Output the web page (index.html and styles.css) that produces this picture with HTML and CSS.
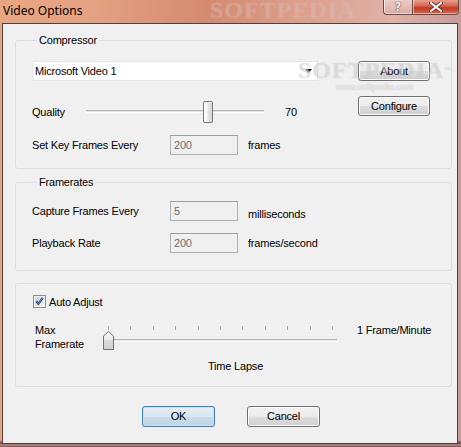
FILE: index.html
```html
<!DOCTYPE html>
<html>
<head>
<meta charset="utf-8">
<title>Video Options</title>
<link rel="stylesheet" href="styles.css">
</head>
<body>
<div class="window">
  <div class="titlebar">
    <span class="title">Video Options</span>
    <span class="wm-title">SOFTPEDIA</span>
    <div class="caption">
      <div class="cap-btn help">?</div>
      <div class="cap-btn close">
        <svg width="14" height="10" viewBox="0 0 14 10"><path d="M2 1 L12 9 M12 1 L2 9" stroke="#5a2a22" stroke-width="3.6" stroke-linecap="square"/><path d="M2 1 L12 9 M12 1 L2 9" stroke="#ffffff" stroke-width="2" stroke-linecap="square"/></svg>
      </div>
    </div>
  </div>
  <div class="client">
    <fieldset class="group compressor">
      <legend>Compressor</legend>
      <div class="comp-grid">
        <div class="comp-left">
          <div class="combo">
            <span>Microsoft Video 1</span>
            <svg class="arrow" width="7" height="4" viewBox="0 0 7 4"><path d="M0 0 H7 L3.5 4 Z" fill="#000"/></svg>
          </div>
          <div class="row quality-row">
            <span class="lbl lbl-quality">Quality</span>
            <div class="hslider">
              <div class="track"></div>
              <div class="thumb"></div>
            </div>
            <span class="val">70</span>
          </div>
          <div class="row">
            <span class="lbl">Set Key Frames Every</span>
            <div class="field">200</div>
            <span class="unit">frames</span>
          </div>
        </div>
        <div class="comp-right">
          <div class="btn">About</div>
          <div class="btn">Configure</div>
        </div>
      </div>
      <div class="wm-content"><span class="wm-big">SOFTPEDIA<sup>™</sup></span><span class="wm-url">www.softpedia.com</span></div>
    </fieldset>

    <fieldset class="group framerates">
      <legend>Framerates</legend>
      <div class="row">
        <span class="lbl">Capture Frames Every</span>
        <div class="field">5</div>
        <span class="unit unit-low">milliseconds</span>
      </div>
      <div class="row row-gap">
        <span class="lbl">Playback Rate</span>
        <div class="field">200</div>
        <span class="unit">frames/second</span>
      </div>
    </fieldset>

    <fieldset class="group lapse">
      <div class="check-row">
        <svg class="check" width="13" height="13" viewBox="0 0 13 13">
          <defs>
            <linearGradient id="cb" x1="0" y1="0" x2="1" y2="1">
              <stop offset="0" stop-color="#cbcfd5"/>
              <stop offset="1" stop-color="#f7f7f7"/>
            </linearGradient>
          </defs>
          <rect x="0.5" y="0.5" width="12" height="12" fill="#f4f4f4" stroke="#8f8f8f"/>
          <rect x="2" y="2" width="9" height="9" fill="url(#cb)"/>
          <path d="M3.3 6.2 L5.4 8.8 L9.8 2.8" fill="none" stroke="#1d3f7a" stroke-width="2.2"/>
          <path d="M3.3 6.2 L5.4 8.8 L9.8 2.8" fill="none" stroke="#5a8fd6" stroke-width="1"/>
        </svg>
        <span>Auto Adjust</span>
      </div>
      <div class="slider-row">
        <span class="lbl-max">Max<br>Framerate</span>
        <div class="tslider">
          <div class="ticks">
            <i></i><i></i><i></i><i></i><i></i><i></i><i></i><i></i><i></i><i></i><i></i>
          </div>
          <div class="ttrack"></div>
          <svg class="tthumb" width="11" height="19" viewBox="0 0 11 19">
            <defs>
              <linearGradient id="tg" x1="0" y1="0" x2="0" y2="1">
                <stop offset="0" stop-color="#f7f7f7"/>
                <stop offset="0.45" stop-color="#ececec"/>
                <stop offset="0.5" stop-color="#dcdcdc"/>
                <stop offset="1" stop-color="#cfcfcf"/>
              </linearGradient>
            </defs>
            <path d="M0.5 18.5 V5 L5.5 0.5 L10.5 5 V18.5 Z" fill="url(#tg)" stroke="#707070"/>
          </svg>
        </div>
        <span class="lbl-min">1 Frame/Minute</span>
      </div>
      <div class="time-lapse">Time Lapse</div>
    </fieldset>

    <div class="buttons">
      <div class="btn btn-ok">OK</div>
      <div class="btn btn-cancel">Cancel</div>
    </div>
  </div>
</div>
</body>
</html>
```

FILE: styles.css
```css
* { box-sizing: border-box; }
html, body { margin: 0; padding: 0; }
body {
  width: 461px;
  height: 447px;
  overflow: hidden;
  font-family: "Liberation Sans", Arial, sans-serif;
  font-size: 11px;
  color: #000;
}

.window {
  position: relative;
  width: 461px;
  height: 447px;
  display: flex;
  flex-direction: column;
  padding: 0 3px 3px 2px;
  background:
    linear-gradient(180deg, rgba(0,0,0,0) 0, rgba(0,0,0,0) 440px, #6b4646 443px, #b98a8a 445px, #7a5050 447px),
    linear-gradient(90deg, #e9a682 0, #e4a283 20%, #d48a70 45%, #dc9e8a 65%, #dfb2a8 85%, #c79c98 100%);
}

.titlebar {
  position: relative;
  height: 23px;
  display: flex;
  align-items: flex-start;
  flex: none;
}
.title {
  font-family: "Noto Sans", "Open Sans", sans-serif;
  font-size: 12px;
  line-height: 16px;
  padding: 3px 0 0 1px;
  color: #000;
}
.wm-title {
  position: absolute;
  left: 208px;
  top: 0;
  font-family: "Liberation Serif", serif;
  font-weight: bold;
  font-size: 24px;
  line-height: 20px;
  letter-spacing: 1px;
  color: rgba(150, 80, 70, 0.18);
  text-shadow: 0 0 1px rgba(255,255,255,0.35);
  pointer-events: none;
}
.caption {
  position: relative;
  margin-left: auto;
  display: flex;
  margin-right: -1px;
}
.cap-btn {
  height: 15px;
  border: 1px solid #6b4a48;
  border-top: none;
  display: flex;
  align-items: center;
  justify-content: center;
}
.help {
  width: 29px;
  border-radius: 0 0 0 4px;
  border-right: none;
  background: linear-gradient(180deg, rgba(240,210,205,0.85), rgba(215,170,165,0.9));
  box-shadow: inset 1px 0 0 rgba(255,255,255,0.6), inset 0 -1px 0 rgba(255,255,255,0.5);
  font-family: "DejaVu Sans", sans-serif;
  font-weight: bold;
  font-size: 12px;
  line-height: 12px;
  color: #f4f0f0;
  text-shadow: 0 0 1px #4a3030, 0 0 1px #4a3030;
}
.close {
  width: 47px;
  border-radius: 0 0 4px 0;
  background: linear-gradient(180deg, #e8a090 0, #d2604a 45%, #c03a22 55%, #d8684e 100%);
  box-shadow: inset 1px 0 0 rgba(255,255,255,0.5), inset 0 -1px 0 rgba(255,220,210,0.6);
}

.client {
  flex: 1;
  background: #f0f0f0;
  border: 1px solid #4f3f3f;
  display: flex;
  flex-direction: column;
  letter-spacing: -0.2px;
}

.group {
  position: relative;
  margin: 0 5px 0 12px;
  padding: 0;
  border: 1px solid #d5dfe5;
  border-radius: 3px;
  min-width: 0;
}
.group legend {
  margin-left: 5px;
  padding: 0 2px;
  font-size: 11px;
  line-height: 13px;
}

.row {
  display: flex;
  align-items: center;
  height: 20px;
}
.lbl { width: 138px; }
.field {
  width: 68px;
  height: 20px;
  border: 1px solid #adb2b5;
  border-top-color: #9ba0a3;
  background: #f0f0f0;
  color: #6d6d6d;
  padding: 2px 0 0 3px;
  line-height: 14px;
}
.unit { margin-left: 10px; }
.unit-low { padding-top: 5px; }

/* Compressor */
.compressor { margin-top: 10px; padding: 14px 20px 13px 16px; }
.comp-grid {
  display: grid;
  grid-template-columns: 286px 72px;
  column-gap: 40px;
}
.comp-left { display: flex; flex-direction: column; }
.comp-right { display: flex; flex-direction: column; gap: 15px; }
.combo {
  height: 20px;
  background: #fff;
  border: 1px solid #e6e6e6;
  display: flex;
  align-items: center;
  padding-left: 2px;
}
.combo .arrow { margin-left: auto; margin-right: 5px; }
.quality-row { height: 22px; margin-top: 20px; margin-bottom: 12px; }
.lbl-quality { width: 54px; }
.hslider {
  position: relative;
  width: 178px;
  height: 22px;
}
.track {
  position: absolute;
  left: 0; right: 0; top: 9px;
  height: 3px;
  border-top: 1px solid #b4b4b4;
  border-bottom: 1px solid #ffffff;
  background: #e3e3e3;
}
.thumb {
  position: absolute;
  left: 117px;
  top: 0;
  width: 10px;
  height: 22px;
  border: 1px solid #767676;
  border-radius: 2px;
  background: linear-gradient(90deg, #f8f8f8 0, #f8f8f8 30%, #e2e2e2 60%, #d6d6d6 100%);
  box-shadow: inset 1px 1px 0 #fff;
}
.val { margin-left: 21px; }

.btn {
  height: 20px;
  border: 1px solid #707070;
  border-radius: 3px;
  background: linear-gradient(180deg, #f2f2f2 0, #ebebeb 50%, #dddddd 50%, #cfcfcf 100%);
  box-shadow: inset 0 0 0 1px #fcfcfc;
  display: flex;
  align-items: center;
  justify-content: center;
  line-height: 13px;
}

.wm-content {
  position: absolute;
  left: 282px;
  top: 12px;
  display: flex;
  flex-direction: column;
  align-items: center;
  pointer-events: none;
  letter-spacing: 0;
}
.wm-big {
  font-family: "Liberation Serif", serif;
  font-weight: bold;
  font-size: 24px;
  line-height: 22px;
  letter-spacing: 1px;
  color: rgba(255,255,255,0.4);
  text-shadow: 0 0 1px rgba(140,140,140,0.45);
}
.wm-big sup { font-size: 7px; vertical-align: top; letter-spacing: 0; }
.wm-url {
  font-family: "Liberation Sans", sans-serif;
  font-size: 9px;
  line-height: 10px;
  margin-top: 1px;
  color: rgba(255,255,255,0.85);
  text-shadow: 0 0 1px rgba(120,120,120,0.7);
}

/* Framerates */
.framerates { margin-top: 7px; padding: 12px 20px 17px 16px; }
.row-gap { margin-top: 12px; }

/* Time lapse group */
.lapse { margin-top: 12px; padding: 11px 17px 13px 17px; }
.check-row { display: flex; align-items: center; height: 13px; }
.check-row span { margin-left: 3px; }
.slider-row {
  display: flex;
  align-items: flex-start;
  margin-top: 15px;
}
.lbl-max { width: 70px; line-height: 14px; padding-left: 2px; }
.tslider {
  position: relative;
  width: 234px;
  height: 26px;
  margin-top: 3px;
}
.ticks {
  display: flex;
  justify-content: space-between;
  padding: 0 4px 0 5px;
  height: 4px;
}
.ticks i {
  display: block;
  width: 1px;
  height: 4px;
  background: #a8a8a8;
}
.ttrack {
  position: absolute;
  left: 0; right: 0; top: 13px;
  height: 3px;
  border-top: 1px solid #b4b4b4;
  border-bottom: 1px solid #ffffff;
  background: #e3e3e3;
}
.tthumb { position: absolute; left: 0; top: 5px; }
.lbl-min { margin-left: 20px; line-height: 14px; }
.time-lapse { margin-top: 8px; padding-left: 175px; line-height: 13px; }

/* Bottom buttons */
.buttons {
  display: flex;
  gap: 32px;
  padding-left: 139px;
  margin-top: 19px;
}
.buttons .btn { width: 73px; height: 21px; }
.btn-ok {
  border-color: #3c7fb1;
  box-shadow: inset 0 0 0 1px #c6e4f6;
  background: linear-gradient(180deg, #e4eef5 0, #dae7f0 50%, #c9dbe8 50%, #c0d5e3 100%);
}
```
